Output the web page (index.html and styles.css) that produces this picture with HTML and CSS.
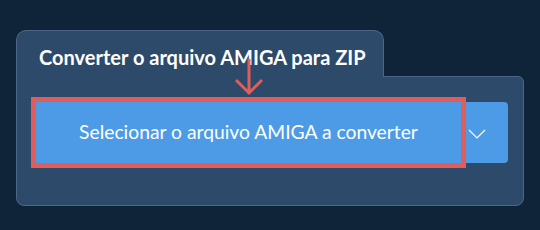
FILE: index.html
```html
<!DOCTYPE html>
<html lang="pt">
<head>
    <meta charset="UTF-8">
    <meta name="viewport" content="width=device-width, initial-scale=1.0">
    <title>Converter AMIGA para ZIP</title>
    <link rel="stylesheet" href="styles.css">
</head>
<body>
    <div class="converter">
        <div class="tab">Converter o arquivo AMIGA para ZIP</div>
        <div class="panel">
            <div class="button-group">
                <button class="select-button">Selecionar o arquivo AMIGA a converter</button>
                <button class="dropdown-button" aria-label="Mais opções">
                    <svg width="18" height="10" viewBox="0 0 18 10">
                        <path d="M1 1 L9 9 L17 1" fill="none" stroke="#fff" stroke-width="1.2"/>
                    </svg>
                </button>
            </div>
        </div>
        <svg class="hint-arrow" width="32" height="40" viewBox="0 0 32 40">
            <path d="M16 0 V35 M3 21 L16 34 L29 21" fill="none" stroke="#e05d5b" stroke-width="3"/>
        </svg>
    </div>
</body>
</html>
```

FILE: styles.css
```css
body {
    margin: 0;
    padding: 30px 16px;
    background-color: #0f2339;
    font-family: Lato, "Open Sans", sans-serif;
}

.converter {
    width: 508px;
    position: relative;
}

.tab {
    width: 344px;
    height: 46px;
    padding: 0 0 0 22px;
    box-sizing: content-box;
    background-color: #2d4a6a;
    border: 1px solid #4b6688;
    border-bottom: none;
    border-radius: 10px 10px 0 0;
    color: #fff;
    font-size: 20px;
    font-weight: bold;
    line-height: 52px;
    position: relative;
    z-index: 1;
    margin-bottom: -1px;
}

.panel {
    background-color: #2d4a6a;
    border: 1px solid #4b6688;
    border-radius: 0 6px 8px 8px;
    padding: 25px 0 0 19px;
    box-sizing: border-box;
    height: 130px;
}

.button-group {
    display: flex;
    width: 472px;
    height: 61px;
}

.select-button {
    width: 425px;
    border: none;
    background-color: #4d9be6;
    color: #fff;
    font-family: Lato, "Open Sans", sans-serif;
    font-size: 19.3px;
    outline: 5px solid #e05d5b;
    position: relative;
    z-index: 1;
    padding: 0 0 2px 0;
}

.dropdown-button {
    flex: 1;
    border: none;
    background-color: #4d9be6;
    border-radius: 0 4px 4px 0;
    display: flex;
    align-items: center;
    padding: 2px 0 0 7px;
}

.hint-arrow {
    position: absolute;
    left: 217px;
    top: 29px;
    z-index: 2;
}
```
